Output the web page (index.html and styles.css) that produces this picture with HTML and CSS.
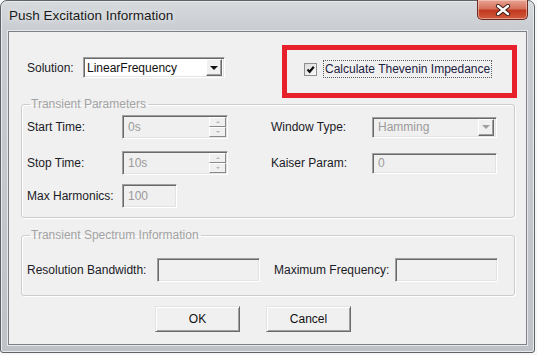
FILE: index.html
```html
<!DOCTYPE html>
<html lang="en">
  <head>
    <meta charset="UTF-8" />
    <meta name="viewport" content="width=device-width, initial-scale=1.0" />
    <title>Push Excitation Information</title>
    <link rel="stylesheet" href="styles.css">
  </head>
  <body>
    <div class="window">
      <div class="titlebar">
        <span class="title">Push Excitation Information</span>
        <div class="close-btn">
          <svg width="16" height="12" viewBox="0 0 16 12">
            <path d="M3 2 L13 10 M13 2 L3 10" stroke="#3a1a14" stroke-width="4.2" stroke-linecap="round" />
            <path d="M3 2 L13 10 M13 2 L3 10" stroke="#ffffff" stroke-width="2.4" stroke-linecap="round" />
          </svg>
        </div>
      </div>

      <div class="client">
        <div class="top">
          <div class="solution">
            <span class="lbl solution-lbl">Solution:</span>
            <div class="field select active">
              <span class="val">LinearFrequency</span>
              <span class="drop"><i class="arrow down"></i></span>
            </div>
          </div>

          <div class="highlight">
            <div class="check-row">
              <span class="checkbox">
                <svg width="9" height="9" viewBox="0 0 9 9">
                  <path d="M1.5 4.5 L3.7 6.8 L7.8 1.8" fill="none" stroke="#111" stroke-width="2.2" />
                </svg>
              </span>
              <span class="focus-lbl">Calculate Thevenin Impedance</span>
            </div>
          </div>
        </div>

        <fieldset class="group group-params">
          <legend>Transient Parameters</legend>
          <div class="row row-start">
            <span class="lbl col-a">Start Time:</span>
            <div class="field spin">
              <span class="val">0s</span>
              <span class="spin-btns">
                <span class="spin-btn"><i class="arrow up small"></i></span>
                <span class="spin-btn"><i class="arrow down small"></i></span>
              </span>
            </div>
            <span class="lbl col-c">Window Type:</span>
            <div class="field select wide">
              <span class="val">Hamming</span>
              <span class="drop"><i class="arrow down dim"></i></span>
            </div>
          </div>
          <div class="row row-stop">
            <span class="lbl col-a">Stop Time:</span>
            <div class="field spin">
              <span class="val">10s</span>
              <span class="spin-btns">
                <span class="spin-btn"><i class="arrow up small"></i></span>
                <span class="spin-btn"><i class="arrow down small"></i></span>
              </span>
            </div>
            <span class="lbl col-c">Kaiser Param:</span>
            <div class="field wide">
              <span class="val">0</span>
            </div>
          </div>
          <div class="row row-max">
            <span class="lbl col-a">Max Harmonics:</span>
            <div class="field short">
              <span class="val">100</span>
            </div>
          </div>
        </fieldset>

        <fieldset class="group group-spectrum">
          <legend>Transient Spectrum Information</legend>
          <div class="row">
            <span class="lbl col-res">Resolution Bandwidth:</span>
            <div class="field medium"></div>
            <span class="lbl col-freq">Maximum Frequency:</span>
            <div class="field medium"></div>
          </div>
        </fieldset>

        <div class="buttons">
          <button class="btn">OK</button>
          <button class="btn">Cancel</button>
        </div>
      </div>
    </div>
  </body>
</html>
```

FILE: styles.css
```css
body {
  margin: 0;
  background-color: #f7f7f7;
  font-family: "Liberation Sans", Arial, sans-serif;
  font-size: 12px;
  color: #1a1a26;
}

.window {
  width: 535px;
  height: 353px;
  box-sizing: border-box;
  border: 1px solid #5e6266;
  border-radius: 7px 7px 3px 3px;
  background: linear-gradient(to bottom, #d6dadd 0px, #c9cdd1 30px, #bfc3c7 100%);
  box-shadow: inset 0 0 0 1px #e8eaec;
  display: flex;
  flex-direction: column;
}

.titlebar {
  height: 30px;
  display: flex;
  align-items: flex-start;
  padding-left: 8px;
}

.title {
  margin-top: 7px;
  font-size: 13.5px;
  color: #1a1a1a;
  text-shadow: 0 0 6px rgba(255, 255, 255, 0.9);
}

.close-btn {
  margin-left: auto;
  margin-right: 6px;
  width: 51px;
  height: 20px;
  margin-top: -1px;
  box-sizing: border-box;
  border: 1px solid #6b2a22;
  border-top: none;
  border-radius: 0 0 5px 5px;
  background: linear-gradient(to bottom, #e8a493 0%, #d6715c 45%, #c2391f 55%, #d05a3c 100%);
  box-shadow: inset 0 0 0 1px rgba(255, 220, 210, 0.5);
  display: flex;
  align-items: center;
  justify-content: center;
}

.client {
  margin: 0 7px;
  height: 314px;
  box-sizing: border-box;
  border: 1px solid #7d8185;
  box-shadow: 0 0 0 1px #e6e8ea;
  background-color: #f0f0f0;
}

.lbl {
  white-space: nowrap;
}

/* top row */
.top {
  display: flex;
  align-items: flex-start;
  height: 65px;
  padding-left: 18px;
}

.solution {
  display: flex;
  align-items: center;
  margin-top: 25px;
}

.solution-lbl {
  width: 56px;
}

.highlight {
  margin-left: 57px;
  margin-top: 13px;
  width: 235px;
  height: 53px;
  box-sizing: border-box;
  border: 5px solid #e8202b;
  padding: 10px 0 0 17px;
}

.check-row {
  display: flex;
  align-items: center;
  gap: 6px;
}

.checkbox {
  width: 13px;
  height: 13px;
  box-sizing: border-box;
  border: 1px solid #8e8f8f;
  background: linear-gradient(to bottom right, #dcdcdc, #fbfbfb);
  display: flex;
  align-items: center;
  justify-content: center;
}

.focus-lbl {
  border: 1px dotted #5a5a5a;
  padding: 1px;
  line-height: 14px;
  color: #1e2040;
}

/* fields */
.field {
  box-sizing: border-box;
  height: 24px;
  border: 1px solid;
  border-color: #a0a0a0 #ffffff #ffffff #a0a0a0;
  box-shadow: inset 1px 1px #696969, inset -1px -1px #e3e3e3;
  background-color: #f0f0f0;
  display: flex;
  align-items: center;
  color: #9a9a9a;
}

.field .val {
  padding-left: 5px;
  flex: 1;
}

.select.active {
  width: 142px;
  height: 21px;
  background-color: #ffffff;
  color: #111;
}

.select.active .val {
  padding-left: 3px;
}

.drop {
  width: 16px;
  height: 17px;
  margin-right: 2px;
  box-sizing: border-box;
  border: 1px solid;
  border-color: #ffffff #696969 #696969 #ffffff;
  box-shadow: inset -1px -1px #a0a0a0;
  background-color: #f0f0f0;
  display: flex;
  align-items: center;
  justify-content: center;
}

.arrow {
  width: 0;
  height: 0;
  border-left: 4px solid transparent;
  border-right: 4px solid transparent;
}

.arrow.down {
  border-top: 4px solid #111;
}

.arrow.up {
  border-bottom: 4px solid #111;
}

.arrow.dim.down {
  border-top-color: #a0a0a0;
}

.arrow.small {
  border-left-width: 2px;
  border-right-width: 2px;
}

.arrow.small.down {
  border-top: 2px solid #b5b5b5;
}

.arrow.small.up {
  border-bottom: 2px solid #b5b5b5;
}

.spin {
  width: 106px;
}

.spin-btns {
  display: flex;
  flex-direction: column;
  align-self: stretch;
  width: 17px;
  margin: 1px 1px 1px 0;
}

.spin-btn {
  flex: 1;
  box-sizing: border-box;
  border: 1px solid;
  border-color: #ffffff #8a8a8a #8a8a8a #ffffff;
  background-color: #f0f0f0;
  display: flex;
  align-items: center;
  justify-content: center;
}

.wide {
  width: 125px;
  height: 21px;
}

.short {
  width: 55px;
}

.medium {
  width: 103px;
}

/* group boxes */
.group {
  margin: 0 11px 0 12px;
  padding: 0 0 9px 0;
  border: 1px solid #cdcdcd;
  border-radius: 3px;
  box-shadow: inset 1px 1px #ffffff, 1px 1px #ffffff;
  min-width: 0;
}

.group legend {
  margin-left: 8px;
  padding: 0 2px 0 1px;
  color: #a3a3a3;
  line-height: 14px;
}

.row {
  display: flex;
  align-items: center;
  padding-left: 5px;
}

.row-start {
  margin-top: 4px;
}

.row-stop {
  margin-top: 12px;
}

.row-max {
  margin-top: 9px;
}

.col-a {
  width: 95px;
}

.col-c {
  width: 101px;
  margin-left: 43px;
}

.group-spectrum {
  margin-top: 10px;
  padding: 16px 0 13px 0;
}

.col-res {
  width: 130px;
}

.col-freq {
  width: 121px;
  margin-left: 14px;
}

/* buttons */
.buttons {
  display: flex;
  gap: 26px;
  padding-left: 146px;
  margin-top: 10px;
}

.btn {
  width: 85px;
  height: 26px;
  font-family: inherit;
  font-size: 12px;
  color: #111;
  background-color: #f0f0f0;
  border: 1px solid;
  border-color: #e3e3e3 #6a6a6a #6a6a6a #e3e3e3;
  box-shadow: inset 1px 1px #ffffff, inset -1px -1px #a0a0a0;
  padding: 0;
}
```
